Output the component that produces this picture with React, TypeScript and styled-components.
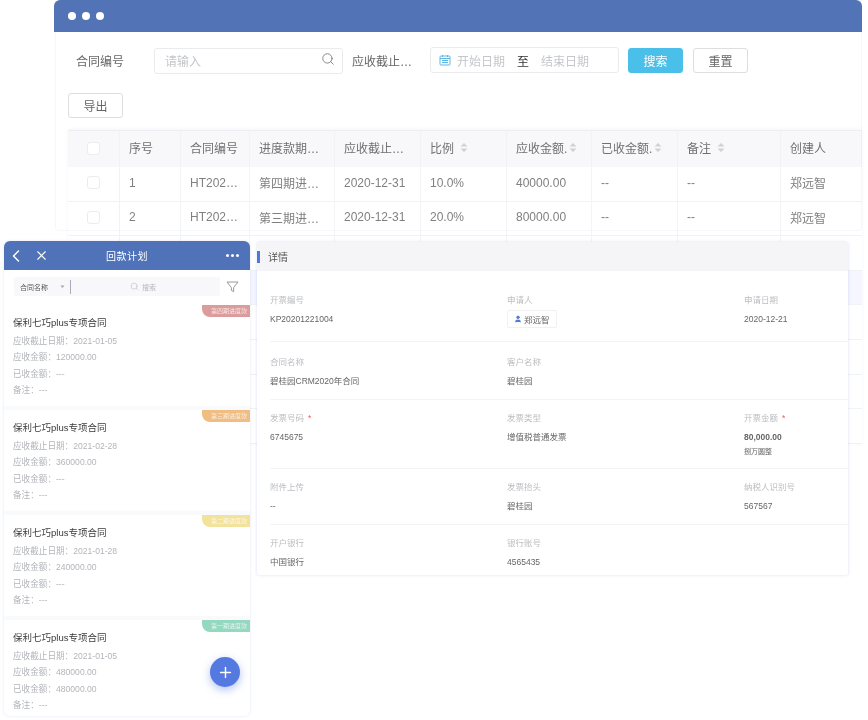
import React from 'react';
import styled, { createGlobalStyle } from 'styled-components';
import { ChevronLeft, X, Search, Plus, User } from 'lucide-react';

const GlobalStyle = createGlobalStyle`
  html, body {
    margin: 0;
    padding: 0;
    background: #fff;
  }
  body {
    font-family: "Liberation Sans", "Noto Sans CJK SC", sans-serif;
    color: #666;
  }
  * {
    box-sizing: border-box;
  }
`;

const Stage = styled.div`
  position: relative;
  width: 868px;
  height: 720px;
  overflow: hidden;
  background: #fff;
  filter: blur(0.45px);
`;

/* ---- back window ---- */
const BackWindow = styled.section`
  position: absolute;
  left: 54px;
  top: 0;
  width: 808px;
  height: 443px;
  display: flex;
  flex-direction: column;
  background: #fff;
  &::after {
    content: '';
    position: absolute;
    left: 1px;
    right: 0;
    top: 32px;
    height: 198px;
    border: 1px solid rgba(232, 235, 250, 0.4);
    border-top: 0;
    border-radius: 0 0 4px 4px;
    pointer-events: none;
  }
`;

const TitleBar = styled.header`
  height: 32px;
  flex: none;
  display: flex;
  align-items: center;
  gap: 6px;
  padding: 0 0 0 14px;
  background: #5273b5;
  border-radius: 6px 6px 0 0;
`;

const Dot = styled.i`
  width: 8px;
  height: 8px;
  border-radius: 50%;
  background: #fff;
`;

const Toolbar = styled.div`
  height: 56px;
  flex: none;
  display: flex;
  align-items: center;
  padding-left: 22px;
  font-size: 12px;
`;

const FieldLabel = styled.span<{ $width: number }>`
  width: ${(p) => p.$width}px;
  flex: none;
  color: #666;
`;

const TextInput = styled.div`
  width: 189px;
  height: 26px;
  margin: 1px 9px 0 0;
  flex: none;
  display: flex;
  align-items: center;
  justify-content: space-between;
  padding: 0 7px 0 10px;
  border: 1px solid #e9ebee;
  border-radius: 3px;
  color: #c4c6ca;
  svg {
    color: #666;
    margin-top: -3px;
  }
`;

const DateInput = styled.div`
  width: 189px;
  height: 26px;
  margin-right: 9px;
  flex: none;
  display: flex;
  align-items: center;
  gap: 6px;
  padding: 0 8px;
  border: 1px solid #e9ebee;
  border-radius: 3px;
  color: #c4c6ca;
  b {
    font-weight: 400;
    color: #333;
    margin: 0 6px;
  }
`;

const ActionButton = styled.button<{ $primary?: boolean }>`
  width: 55px;
  height: 25px;
  flex: none;
  margin-right: 10px;
  padding: 0;
  font: inherit;
  font-size: 12px;
  border-radius: 3px;
  border: 1px solid ${(p) => (p.$primary ? '#49bfe9' : '#dcdee2')};
  background: ${(p) => (p.$primary ? '#49bfe9' : '#fff')};
  color: ${(p) => (p.$primary ? '#fff' : '#666')};
`;

const ExportRow = styled.div`
  height: 42px;
  flex: none;
  padding: 5px 0 0 14px;
`;

const DataTable = styled.div`
  margin-left: 14px;
  flex: 1;
  display: grid;
  grid-template-columns: 52px 61px 69px 85px 86px 86px 85px 86px 103px 81px;
  grid-template-rows: 36px;
  grid-auto-rows: 34.6px;
  align-content: start;
  font-size: 12px;
  color: #808080;
  border-top: 1px solid #eceef4;
  box-shadow: 0 -1px 3px rgba(120, 130, 180, 0.08);
`;

const HeadCell = styled.div<{ $tight?: boolean }>`
  display: flex;
  align-items: center;
  gap: ${(p) => (p.$tight ? 2 : 6)}px;
  padding: 0 0 3px 9px;
  background: #f8f8fa;
  border-right: 1px solid #f1f2f5;
  color: #707070;
  white-space: nowrap;
  overflow: hidden;
  &:last-child {
    border-right: 0;
  }
`;

const BodyCell = styled.div<{ $tint?: boolean }>`
  display: flex;
  align-items: center;
  padding: 0 0 2px 9px;
  border-right: 1px solid #f3f4f7;
  border-bottom: 1px solid #f1f2f5;
  background: ${(p) => (p.$tint ? '#f5f6ff' : '#fff')};
  white-space: nowrap;
  overflow: hidden;
`;

const LastBodyCell = styled(BodyCell)`
  border-right: 0;
`;

const CheckCell = styled.div<{ $head?: boolean }>`
  display: flex;
  align-items: center;
  justify-content: center;
  padding-bottom: 2px;
  background: ${(p) => (p.$head ? '#f8f8fa' : '#fff')};
  border-right: 1px solid #f1f2f5;
  border-bottom: ${(p) => (p.$head ? '0' : '1px solid #f1f2f5')};
`;

const CheckBox = styled.span`
  width: 13px;
  height: 13px;
  border: 1px solid #ebecef;
  border-radius: 3px;
  background: #fff;
`;

const SortIcon = styled.svg`
  flex: none;
`;

const Sort = () => (
  <SortIcon width="8" height="9" viewBox="0 0 8 9" fill="#cfd1d5">
    <path d="M4 0 7.5 3.6h-7zM4 9 .5 5.4h7z" />
  </SortIcon>
);

/* ---- mobile window ---- */
const PhoneWindow = styled.section`
  position: absolute;
  left: 4px;
  top: 241px;
  width: 246px;
  height: 475px;
  display: flex;
  flex-direction: column;
  background: #f9fafc;
  border-radius: 6px;
  box-shadow: 0 0 3px rgba(110, 130, 200, 0.22);
  overflow: hidden;
`;

const PhoneBar = styled.header`
  height: 29px;
  flex: none;
  display: grid;
  grid-template-columns: 56px 1fr 56px;
  align-items: center;
  background: #4f72b8;
  color: #fff;
  font-size: 10px;
  letter-spacing: 0.5px;
  text-align: center;
`;

const BarIcons = styled.div`
  display: flex;
  align-items: center;
  gap: 8px;
  padding-left: 2px;
`;

const MoreDots = styled.div`
  display: flex;
  justify-content: flex-end;
  gap: 2px;
  padding-right: 11px;
  i {
    width: 3px;
    height: 3px;
    border-radius: 50%;
    background: #fff;
  }
`;

const SearchStrip = styled.div`
  height: 35px;
  flex: none;
  display: flex;
  align-items: center;
  gap: 6px;
  background: #fff;
  padding: 0 10px 2px;
`;

const SearchField = styled.div`
  width: 206px;
  height: 19px;
  display: flex;
  align-items: center;
  background: #f8f8fa;
  font-size: 7px;
  color: #555;
  border-radius: 2px;
  padding-left: 6px;
`;

const SearchSelect = styled.div`
  width: 51px;
  height: 14px;
  display: flex;
  align-items: center;
  justify-content: space-between;
  padding-right: 4px;
  border-right: 1px solid #aab;
  em {
    font-style: normal;
    color: #aaa;
    transform: scaleY(0.6);
  }
`;

const SearchHint = styled.div`
  flex: 1;
  display: flex;
  align-items: center;
  justify-content: center;
  gap: 3px;
  color: #b5b7bb;
  padding-right: 5px;
`;

const PlanCard = styled.article`
  position: relative;
  flex: none;
  height: 101px;
  margin-bottom: 4px;
  padding: 9.5px 9px 0;
  background: #fff;
`;

const CardTitle = styled.h3`
  margin: 0 0 3px;
  font-size: 9.5px;
  line-height: 15px;
  font-weight: 400;
  color: #3a3a3a;
`;

const CardLine = styled.p`
  margin: 0;
  font-size: 8.6px;
  line-height: 16.6px;
  color: #b3b5ba;
`;

const StageTag = styled.span<{ $color: string }>`
  position: absolute;
  top: 0;
  right: 0;
  width: 48px;
  height: 12px;
  padding-left: 9px;
  line-height: 12px;
  font-size: 6px;
  color: rgba(255, 255, 255, 0.75);
  white-space: nowrap;
  background: ${(p) => p.$color};
  border-radius: 0 0 0 8px;
`;

const Fab = styled.button`
  position: absolute;
  right: 10px;
  bottom: 29px;
  width: 30px;
  height: 30px;
  padding: 0;
  display: flex;
  align-items: center;
  justify-content: center;
  border: 0;
  border-radius: 50%;
  color: #fff;
  background: #5479e0;
  box-shadow: 0 3px 8px rgba(84, 121, 224, 0.45);
`;

/* ---- detail window ---- */
const DetailWindow = styled.section`
  position: absolute;
  left: 257px;
  top: 242px;
  width: 591px;
  height: 333px;
  background: #fff;
  border-radius: 3px;
  box-shadow: 0 0 3px rgba(120, 135, 230, 0.3);
  display: flex;
  flex-direction: column;
`;

const DetailHead = styled.header`
  height: 29px;
  flex: none;
  display: flex;
  align-items: center;
  padding-left: 11px;
  background: #f5f5f7;
  font-size: 10px;
  color: #555;
  position: relative;
  &::before {
    content: '';
    position: absolute;
    left: 0;
    top: 9px;
    width: 3px;
    height: 12px;
    background: #4f78d8;
  }
`;

const DetailBody = styled.div`
  padding: 0 0 0 13px;
`;

const InfoRow = styled.div<{ $height: number; $top: number }>`
  height: ${(p) => p.$height}px;
  padding-top: ${(p) => p.$top}px;
  display: grid;
  grid-template-columns: 237px 237px 1fr;
  border-bottom: 1px solid #f3f4f6;
  align-items: start;
  &:last-child {
    border-bottom: 0;
  }
`;

const InfoCell = styled.div`
  display: flex;
  flex-direction: column;
  align-items: flex-start;
`;

const InfoLabel = styled.div`
  height: 19px;
  font-size: 8.5px;
  line-height: 19px;
  color: #bbbdc1;
  em {
    font-style: normal;
    color: #ef5b5b;
    margin-left: 4px;
  }
`;

const InfoValue = styled.div<{ $strong?: boolean }>`
  font-size: 8.5px;
  line-height: 19px;
  color: #666;
  font-weight: ${(p) => (p.$strong ? 700 : 400)};
`;

const InfoNote = styled.div`
  font-size: 7px;
  line-height: 10px;
  color: #666;
`;

const PersonTag = styled.div`
  height: 18px;
  padding: 0 6px;
  display: flex;
  align-items: center;
  gap: 2px;
  border: 1px solid #f0f1f3;
  border-radius: 2px;
  font-size: 8.5px;
  color: #666;
  svg {
    color: #4f78d8;
  }
`;

const columns = ['序号', '合同编号', '进度款期…', '应收截止…', '比例', '应收金额.', '已收金额.', '备注', '创建人'];
const sortable = ['比例', '应收金额.', '已收金额.', '备注'];

const emptyRow = ['', '', '', '', '', '', '', '', ''];
const rows = [
  ['1', 'HT202…', '第四期进…', '2020-12-31', '10.0%', '40000.00', '--', '--', '郑远智'],
  ['2', 'HT202…', '第三期进…', '2020-12-31', '20.0%', '80000.00', '--', '--', '郑远智'],
  emptyRow,
  emptyRow,
  emptyRow,
  emptyRow,
  emptyRow,
  emptyRow,
];

const plans = [
  { tag: '第四期进度款', color: '#dd9c9c', date: '2021-01-05', due: '120000.00', got: '---' },
  { tag: '第三期进度款', color: '#f0bd82', date: '2021-02-28', due: '360000.00', got: '---' },
  { tag: '第二期进度款', color: '#f3e29c', date: '2021-01-28', due: '240000.00', got: '---' },
  { tag: '第一期进度款', color: '#94d8c0', date: '2021-01-05', due: '480000.00', got: '480000.00' },
];

const CalendarIcon = () => (
  <svg width="12" height="12" viewBox="0 0 12 12" fill="none" stroke="#5cb7e6" strokeWidth="1">
    <rect x="1" y="2" width="10" height="9" rx="1" />
    <path d="M1 4.5h10M3.5 1v2M8.5 1v2M3 6.5h6M3 8.5h6" />
  </svg>
);

const FunnelIcon = () => (
  <svg width="13" height="12" viewBox="0 0 13 12" fill="none" stroke="#8b8d92" strokeWidth="0.9">
    <path d="M1 1h11L7.6 6.6v4L5.4 9.4V6.6z" strokeLinejoin="round" />
  </svg>
);

export default function App() {
  return (
    <Stage>
      <GlobalStyle />
      <BackWindow>
        <TitleBar>
          <Dot />
          <Dot />
          <Dot />
        </TitleBar>
        <Toolbar>
          <FieldLabel $width={78}>合同编号</FieldLabel>
          <TextInput>
            请输入
            <Search size={14} strokeWidth={1.3} />
          </TextInput>
          <FieldLabel $width={78}>应收截止…</FieldLabel>
          <DateInput>
            <CalendarIcon />
            开始日期
            <b>至</b>
            结束日期
          </DateInput>
          <ActionButton $primary>搜索</ActionButton>
          <ActionButton>重置</ActionButton>
        </Toolbar>
        <ExportRow>
          <ActionButton>导出</ActionButton>
        </ExportRow>
        <DataTable>
          <CheckCell $head>
            <CheckBox />
          </CheckCell>
          {columns.map((c) => (
            <HeadCell key={c} $tight={c.endsWith('.')}>
              {c}
              {sortable.includes(c) && <Sort />}
            </HeadCell>
          ))}
          {rows.map((r, i) => (
            <React.Fragment key={i}>
              <CheckCell>{r[0] && <CheckBox />}</CheckCell>
              {r.map((v, j) =>
                j === r.length - 1 ? (
                  <LastBodyCell key={j} $tint={i === 3}>
                    {v}
                  </LastBodyCell>
                ) : (
                  <BodyCell key={j} $tint={i === 3}>
                    {v}
                  </BodyCell>
                ),
              )}
            </React.Fragment>
          ))}
        </DataTable>
      </BackWindow>

      <PhoneWindow>
        <PhoneBar>
          <BarIcons>
            <ChevronLeft size={20} strokeWidth={1.8} />
            <X size={15} strokeWidth={1.8} />
          </BarIcons>
          回款计划
          <MoreDots>
            <i />
            <i />
            <i />
          </MoreDots>
        </PhoneBar>
        <SearchStrip>
          <SearchField>
            <SearchSelect>
              合同名称
              <em>▼</em>
            </SearchSelect>
            <SearchHint>
              <Search size={9} strokeWidth={1.4} />
              搜索
            </SearchHint>
          </SearchField>
          <FunnelIcon />
        </SearchStrip>
        {plans.map((p) => (
          <PlanCard key={p.tag}>
            <StageTag $color={p.color}>{p.tag}</StageTag>
            <CardTitle>保利七巧plus专项合同</CardTitle>
            <CardLine>应收截止日期：{p.date}</CardLine>
            <CardLine>应收金额：{p.due}</CardLine>
            <CardLine>已收金额：{p.got}</CardLine>
            <CardLine>备注：---</CardLine>
          </PlanCard>
        ))}
        <Fab>
          <Plus size={17} strokeWidth={2} />
        </Fab>
      </PhoneWindow>

      <DetailWindow>
        <DetailHead>详情</DetailHead>
        <DetailBody>
          <InfoRow $height={71} $top={20}>
            <InfoCell>
              <InfoLabel>开票编号</InfoLabel>
              <InfoValue>KP20201221004</InfoValue>
            </InfoCell>
            <InfoCell>
              <InfoLabel>申请人</InfoLabel>
              <PersonTag>
                <User size={8} fill="currentColor" />
                郑远智
              </PersonTag>
            </InfoCell>
            <InfoCell>
              <InfoLabel>申请日期</InfoLabel>
              <InfoValue>2020-12-21</InfoValue>
            </InfoCell>
          </InfoRow>
          <InfoRow $height={58} $top={11}>
            <InfoCell>
              <InfoLabel>合同名称</InfoLabel>
              <InfoValue>碧桂园CRM2020年合同</InfoValue>
            </InfoCell>
            <InfoCell>
              <InfoLabel>客户名称</InfoLabel>
              <InfoValue>碧桂园</InfoValue>
            </InfoCell>
          </InfoRow>
          <InfoRow $height={69} $top={9}>
            <InfoCell>
              <InfoLabel>
                发票号码<em>*</em>
              </InfoLabel>
              <InfoValue>6745675</InfoValue>
            </InfoCell>
            <InfoCell>
              <InfoLabel>发票类型</InfoLabel>
              <InfoValue>增值税普通发票</InfoValue>
            </InfoCell>
            <InfoCell>
              <InfoLabel>
                开票金额<em>*</em>
              </InfoLabel>
              <InfoValue $strong>80,000.00</InfoValue>
              <InfoNote>捌万圆整</InfoNote>
            </InfoCell>
          </InfoRow>
          <InfoRow $height={56} $top={9}>
            <InfoCell>
              <InfoLabel>附件上传</InfoLabel>
              <InfoValue>--</InfoValue>
            </InfoCell>
            <InfoCell>
              <InfoLabel>发票抬头</InfoLabel>
              <InfoValue>碧桂园</InfoValue>
            </InfoCell>
            <InfoCell>
              <InfoLabel>纳税人识别号</InfoLabel>
              <InfoValue>567567</InfoValue>
            </InfoCell>
          </InfoRow>
          <InfoRow $height={50} $top={9}>
            <InfoCell>
              <InfoLabel>开户银行</InfoLabel>
              <InfoValue>中国银行</InfoValue>
            </InfoCell>
            <InfoCell>
              <InfoLabel>银行账号</InfoLabel>
              <InfoValue>4565435</InfoValue>
            </InfoCell>
          </InfoRow>
        </DetailBody>
      </DetailWindow>
    </Stage>
  );
}
